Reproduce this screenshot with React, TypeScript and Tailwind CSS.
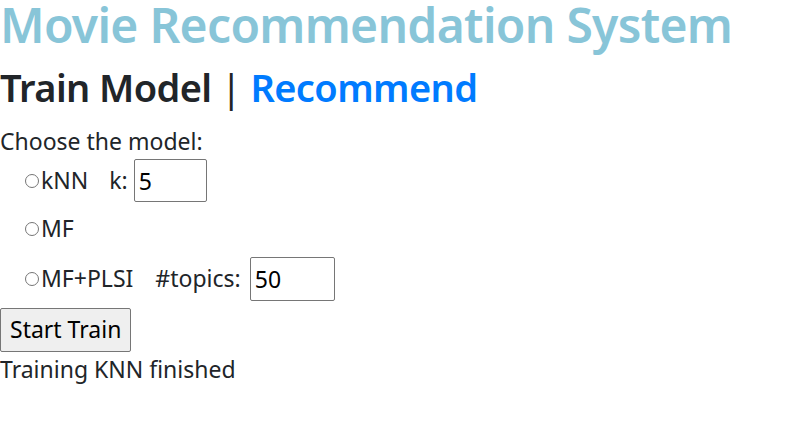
export default function App() {
  return (
    <div
      className="min-h-[446px] w-[792px] bg-white text-[23px] leading-[34.5px] text-[#212529]"
      style={{ fontFamily: '"Noto Sans", "Open Sans", sans-serif' }}
    >
      <h1 className="pt-[1px] text-[48px] leading-[48px] font-semibold tracking-[-0.7px] text-[#88c5d8] whitespace-nowrap">
        Movie Recommendation System
      </h1>
      <h2 className="mt-[12px] mb-[11px] text-[38px] leading-[52px] font-semibold tracking-[-0.6px] whitespace-nowrap">
        Train Model <span className="font-normal">|</span> <a className="text-[#007bff]">Recommend</a>
      </h2>
      <div>Choose the model:</div>
      <div className="flex flex-col pl-[25px]">
        <label className="flex h-[44px] items-center">
          <span className="mr-[2px] h-[14px] w-[14px] rounded-full border border-[#767676]" />
          kNN
          <span className="ml-[21px] mr-[6px]">k:</span>
          <input
            defaultValue="5"
            className="h-[43px] w-[73px] rounded-[2px] border border-[#767676] px-[4px] text-[23px] text-black"
          />
        </label>
        <label className="mt-[4px] flex h-[44px] items-center">
          <span className="mr-[2px] h-[14px] w-[14px] rounded-full border border-[#767676]" />
          MF
        </label>
        <label className="mt-[6px] flex h-[44px] items-center">
          <span className="mr-[2px] h-[14px] w-[14px] rounded-full border border-[#767676]" />
          MF+PLSI
          <span className="ml-[22px] mr-[9px]">#topics:</span>
          <input
            defaultValue="50"
            className="h-[44px] w-[85px] rounded-[2px] border border-[#767676] px-[4px] text-[23px] text-black"
          />
        </label>
      </div>
      <button className="mt-[7px] h-[44px] rounded-[2px] border border-[#767676] bg-[#efefef] px-[9px] text-[23px] leading-[34.5px] text-black">
        Start Train
      </button>
      <div>Training KNN finished</div>
    </div>
  );
}
